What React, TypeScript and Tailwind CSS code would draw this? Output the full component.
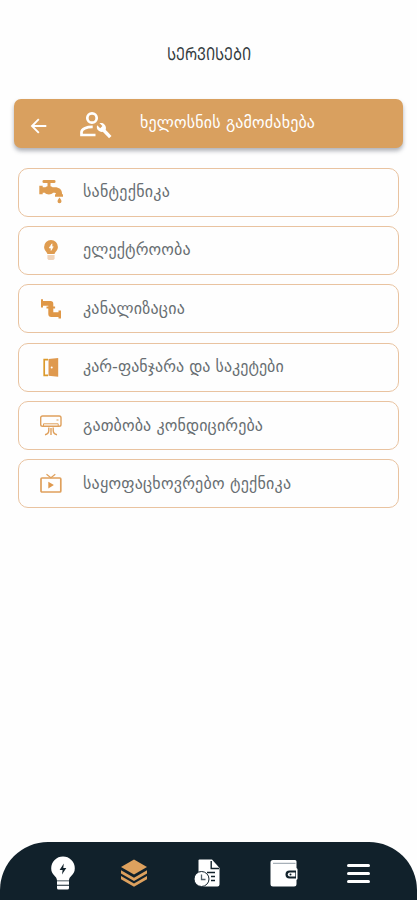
import React from "react";

const gold = "#dda15e";

const Faucet = () => (
  <svg width="24" height="26" viewBox="0 0 24 26" fill="#de9c50">
    <rect x="3.500" y="1" width="13" height="3" rx="1.300" />
    <rect x="8.500" y="3" width="3" height="6" />
    <path d="M0.300 6.800h3.400v1.400h2.800c1-1.200 6-1.200 7 0h2.500c4 0 7 2.200 7 6v1h1v2.500h-8v-2.500h1c0-1-.8-1.400-2-1.400h-1c-1.600 2.200-6.600 2.200-8.200 0H3.700v1.500H.3z" />
    <path d="M20.500 18.600c1 1.600 2 2.600 2 3.700a2 2 0 0 1-4 0c0-1.100 1-2.100 2-3.700z" />
  </svg>
);

const Bulb = () => (
  <svg width="16" height="22" viewBox="0 0 16 22">
    <path d="M8 1a6.900 6.900 0 0 0-6.900 6.900c0 3.800 2.900 4.600 3.300 7.100h7.200c.4-2.500 3.300-3.300 3.300-7.100A6.900 6.900 0 0 0 8 1z" fill="#df9c50" />
    <path d="M4.400 16h7.200v3.800l-1.200 1.300H5.600l-1.200-1.300z" fill="#f0d3b8" />
    <path d="M9 4.800 6.200 8.900h1.900v2.500L10.200 7.700H9z" fill="#fff" stroke="#fff" strokeWidth=".7" />
  </svg>
);

const Pipe = () => (
  <svg width="22" height="22" viewBox="0 0 22 22" fill="#df9747">
    <path d="M1 1.300h2v1.600h7.500a2.800 2.800 0 0 1 2.800 2.800v2.800h1.800v2h-1.800v3.700h5.200v-1.600H21v8h-2.500v-1.700h-7.200a3 3 0 0 1-3-3v-5.400H6.500v-2h1.800v-.7H3v1.600H1z" />
  </svg>
);

const Door = () => (
  <svg width="16" height="21" viewBox="0 0 16 21">
    <path d="M5 2.600H1.200v15.800H5" fill="none" stroke="#dc9a2c" strokeWidth="1.700" />
    <path d="M5.500 2 15.200 1v18.800l-9.700-1.100z" fill="#df994e" />
    <circle cx="8.700" cy="10.500" r="1" fill="#fff" />
  </svg>
);

const AirConditioner = () => (
  <svg width="24" height="22" viewBox="0 0 24 22" fill="none" stroke="#dfa05c" strokeWidth="1.400">
    <rect x="1.700" y="1" width="20.300" height="10.200" rx="1.800" />
    <path d="M4.500 11V8.800h14.700V11M17.500 5h2" strokeWidth="1" />
    <path d="M9.800 12.500v2.800c0 2.300-1.200 4-3.800 4.500M14.200 12.500v2.800c0 2.300 1.200 4 3.800 4.500M12 13v7" />
  </svg>
);

const Television = () => (
  <svg width="24" height="22" viewBox="0 0 24 22" fill="none" stroke="#dfa05c" strokeWidth="1.700">
    <rect x="2" y="5" width="19.800" height="14" rx="1" />
    <path d="m7.500 1.300 4.400 3.400 4.400-3.400" strokeWidth="1.200" />
    <path d="M9.300 8.700v6.700l5.600-3.350z" fill="#df994e" stroke="none" />
  </svg>
);

const rows = [
  { label: "სანტექნიკა", icon: <Faucet />, spacing: "tracking-[0.25px]" },
  { label: "ელექტროობა", icon: <Bulb />, spacing: "tracking-[0.15px]" },
  { label: "კანალიზაცია", icon: <Pipe />, spacing: "tracking-[0.2px]" },
  { label: "კარ-ფანჯარა და საკეტები", icon: <Door />, spacing: "tracking-[0.03px]" },
  { label: "გათბობა კონდიცირება", icon: <AirConditioner />, spacing: "tracking-[0.12px]" },
  { label: "საყოფაცხოვრებო ტექნიკა", icon: <Television />, spacing: "tracking-[0.22px]" },
];

export default function App() {
  return (
    <div className="flex h-[900px] w-[417px] flex-col overflow-hidden bg-[#fefefe] font-['DejaVu_Sans',sans-serif]">
      <h1 className="flex h-[99px] shrink-0 items-center justify-center pt-[9px] text-[16px] text-[#333b40]">
        <span className="scale-x-[0.9] scale-y-[1.12]">ᲡᲔᲠᲕᲘᲡᲔᲑᲘ</span>
      </h1>

      <header className="mx-[14px] flex h-[49px] shrink-0 items-center rounded-[7px] bg-[#d9a05f] text-white shadow-[0_3px_4px_rgba(60,65,80,0.4)]">
        <svg className="ml-[16px] mt-[5px]" width="18" height="18" viewBox="0 0 18 18" fill="none" stroke="#fff" strokeWidth="1.900">
          <path d="M16.300 9H2M8.800 2.200 2 9l6.800 6.800" />
        </svg>
        <svg className="ml-[31px] mt-[3px]" width="34" height="30" viewBox="0 0 34 30" fill="none" stroke="#fff">
          <circle cx="13" cy="8" r="4.700" strokeWidth="2.700" />
          <path d="M16.500 25H2.500v-2.800c0-3.500 5.500-5.400 11.200-5.300" strokeWidth="2.700" />
          <path d="m23 18.500 8.300 8.600" strokeWidth="3.400" />
          <path d="M18.200 15.200a5 5 0 0 0 6.600 6.400l2-2.200a5.200 5.200 0 0 0-6.400-6.300l3 3-2.200 2.100z" fill="#fff" stroke="none" />
        </svg>
        <span className="-mt-[2px] ml-[27px] whitespace-nowrap text-[16px] tracking-[0.150px]">ხელოსნის გამოძახება</span>
      </header>

      <main className="mx-[18px] mt-[19.500px] flex flex-1 flex-col gap-[9.400px]">
        {rows.map((row) => (
          <button key={row.label} className="flex h-[49px] shrink-0 items-center rounded-[10px] border border-[#e9c3a0] bg-[#fefefe] text-left">
            <span className="ml-[19px] flex w-[26px] justify-center">{row.icon}</span>
            <span className={`ml-[19px] whitespace-nowrap text-[16px] text-[#686e72] ${row.spacing}`}>{row.label}</span>
          </button>
        ))}
      </main>

      <nav className="flex h-[58px] shrink-0 items-center rounded-t-[48px] bg-[#11212b] pt-[4px]">
        <svg className="ml-[50px]" width="26" height="36" viewBox="0 0 26 36" fill="#fff">
          <path d="M13 1.500A11.800 11.800 0 0 0 1.200 13.300c0 7.200 5.800 7.600 5.800 12.200h12c0-4.600 5.800-5 5.800-12.200A11.800 11.800 0 0 0 13 1.500zM7 26.300h12v3.500H7zM7 30.800h12v2.200a1.500 1.500 0 0 1-1.500 1.500h-9A1.500 1.500 0 0 1 7 33z" />
          <path d="M13.800 8.500 9.600 15h3l-.6 4.500 4.300-6.400h-3z" fill="#11212b" />
        </svg>
        <svg className="ml-[44px]" width="28" height="30" viewBox="0 0 28 30" fill={gold}>
          <path d="M14 1.500 27 9 14 16.500 1 9z" />
          <path d="m1 12.200 13 7.500 13-7.500v3.200l-13 7.500-13-7.500z" />
          <path d="m1 18 13 7.500L27 18v3.200l-13 7.500-13-7.500z" />
        </svg>
        <svg className="ml-[45px]" width="28" height="30" viewBox="0 0 28 30">
          <path d="M6.500 1.500H19l7.500 8.500v16.500a2 2 0 0 1-2 2h-16a3 3 0 0 1-3-3v-23a1 1 0 0 1 1-1z" fill="#fff" />
          <path d="M18.200 3v7.500H26M14 14.500h8M18 18.500h4M18 22.500h4" fill="none" stroke="#11212b" strokeWidth="1.400" />
          <circle cx="8.500" cy="21" r="7.500" fill="#fff" stroke="#11212b" strokeWidth="1" />
          <path d="M8.500 16.500v5h4" fill="none" stroke="#53616a" strokeWidth="1.300" />
        </svg>
        <svg className="ml-[48px]" width="30" height="28" viewBox="0 0 30 28">
          <path d="M4 1h22a1.500 1.500 0 0 1 1.500 1.500V9l1 1v10l-1 1v4a2.500 2.500 0 0 1-2.500 2.500H4A2.500 2.500 0 0 1 1.500 25V3.500A2.500 2.500 0 0 1 4 1z" fill="#fff" />
          <path d="M4 4.300h22.500" stroke="#84919c" strokeWidth=".9" />
          <path d="M27 11.500h-6.500a4 4 0 0 0 0 8H27z" fill="#11212b" />
          <path d="M20.800 13.500h5.500v4h-5.500a2 2 0 0 1 0-4z" fill="#fff" />
          <circle cx="21.500" cy="15.500" r="1" fill="#11212b" />
        </svg>
        <div className="ml-[48px] flex w-[23px] flex-col gap-[5px]">
          <div className="h-[3px] rounded-sm bg-white" />
          <div className="h-[3px] rounded-sm bg-white" />
          <div className="h-[3px] rounded-sm bg-white" />
        </div>
      </nav>
    </div>
  );
}
